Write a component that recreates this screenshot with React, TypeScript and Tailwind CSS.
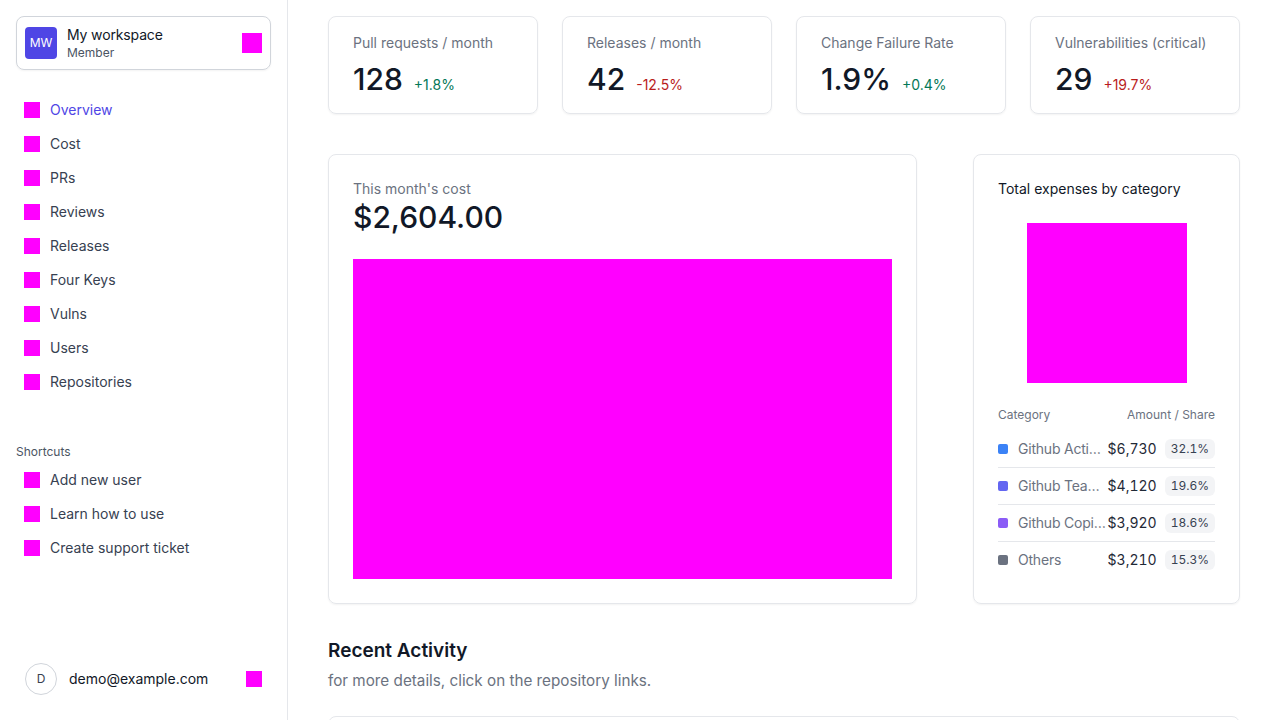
const navItems = ["Overview", "Cost", "PRs", "Reviews", "Releases", "Four Keys", "Vulns", "Users", "Repositories"];
const shortcuts = ["Add new user", "Learn how to use", "Create support ticket"];

const stats = [
  { label: "Pull requests / month", value: "128", delta: "+1.8%", up: true },
  { label: "Releases / month", value: "42", delta: "-12.5%", up: false },
  { label: "Change Failure Rate", value: "1.9%", delta: "+0.4%", up: true },
  { label: "Vulnerabilities (critical)", value: "29", delta: "+19.7%", up: false },
];

const categories = [
  { name: "Github Actions", amount: "$6,730", share: "32.1%", dot: "bg-[#3b82f6]" },
  { name: "Github Team Plan", amount: "$4,120", share: "19.6%", dot: "bg-[#6366f1]" },
  { name: "Github Copilot", amount: "$3,920", share: "18.6%", dot: "bg-[#8b5cf6]" },
  { name: "Others", amount: "$3,210", share: "15.3%", dot: "bg-[#6b7280]" },
];

const NavRow = ({ label, active }: { label: string; active?: boolean }) => (
  <a className={`flex items-center gap-2.5 px-2 py-[7px] text-sm ${active ? "text-[#4f46e5]" : "text-[#374151]"}`}>
    <span className="size-4 shrink-0 bg-[#ff00ff]" />
    {label}
  </a>
);

export default function App() {
  return (
    <div className="flex h-screen overflow-hidden bg-white font-['Inter',sans-serif] text-[#111827]">
      <aside className="flex w-[288px] shrink-0 flex-col border-r border-[#e5e7eb] p-4">
        <div className="flex h-[54px] items-center gap-2.5 rounded-lg border border-[#d1d5db] px-2 shadow-xs">
          <div className="flex size-8 items-center justify-center rounded-sm bg-[#4f46e5] text-xs text-white">MW</div>
          <div className="flex-1">
            <div className="text-sm leading-5 tracking-[-0.01em]">My workspace</div>
            <div className="text-xs leading-4 text-[#4b5563]">Member</div>
          </div>
          <span className="size-5 bg-[#ff00ff]" />
        </div>

        <nav className="mt-[23px] flex flex-col">
          {navItems.map((item, i) => (
            <NavRow key={item} label={item} active={i === 0} />
          ))}
        </nav>

        <div className="mt-[45px] text-xs leading-4 text-[#4b5563]">Shortcuts</div>
        <div className="mt-[3px] flex flex-col">
          {shortcuts.map((item) => (
            <NavRow key={item} label={item} />
          ))}
        </div>

        <div className="mt-auto mb-[9px] flex items-center gap-3 px-[9px]">
          <div className="flex size-8 items-center justify-center rounded-full border border-[#d1d5db] text-xs text-[#374151]">D</div>
          <span className="flex-1 text-sm">demo@example.com</span>
          <span className="size-4 bg-[#ff00ff]" />
        </div>
      </aside>

      <main className="flex-1 overflow-hidden px-10 pt-4">
        <div className="grid grid-cols-4 gap-6">
          {stats.map((s) => (
            <div key={s.label} className="h-[98px] rounded-lg border border-[#e5e7eb] px-6 py-4 shadow-xs">
              <div className="text-sm leading-5 text-[#6b7280]">{s.label}</div>
              <div className="mt-2 flex items-baseline gap-[11px]">
                <span className="text-3xl leading-9 font-[550]">{s.value}</span>
                <span className={`text-sm ${s.up ? "text-[#047857]" : "text-[#b91c1c]"}`}>{s.delta}</span>
              </div>
            </div>
          ))}
        </div>

        <div className="mt-10 flex gap-14">
          <section className="h-[450px] flex-1 rounded-lg border border-[#e5e7eb] p-6 shadow-xs">
            <div className="text-sm leading-5 text-[#6b7280]">This month's cost</div>
            <div className="text-3xl leading-9 font-[550]">$2,604.00</div>
            <div className="mt-6 h-[320px] bg-[#ff00ff]" />
          </section>

          <section className="h-[450px] w-[267px] shrink-0 rounded-lg border border-[#e5e7eb] p-6 shadow-xs">
            <h3 className="text-sm leading-5">Total expenses by category</h3>
            <div className="mx-auto mt-6 size-40 bg-[#ff00ff]" />
            <div className="mt-6 flex justify-between text-xs leading-4 text-[#6b7280]">
              <span>Category</span>
              <span>Amount / Share</span>
            </div>
            <ul className="mt-2">
              {categories.map((c, i) => (
                <li key={c.name} className={`flex h-[37px] items-center border-b ${i < 3 ? "border-[#e5e7eb]" : "border-transparent"}`}>
                  <span className={`size-2.5 shrink-0 rounded-[2px] ${c.dot}`} />
                  <span className="ml-2.5 min-w-0 flex-1 truncate text-sm tracking-[-0.015em] text-[#6b7280]">{c.name}</span>
                  <span className="text-sm text-[#1f2937] tabular-nums">{c.amount}</span>
                  <span className="ml-2 rounded-md bg-[#f3f4f6] px-1.5 py-0.5 text-xs leading-4 text-[#374151] tabular-nums">{c.share}</span>
                </li>
              ))}
            </ul>
          </section>
        </div>

        <h2 className="mt-[33px] text-[19px] leading-7 font-semibold">Recent Activity</h2>
        <p className="mt-1 text-[15.25px] leading-6 text-[#6b7280]">for more details, click on the repository links.</p>
        <div className="mt-[23px] h-[200px] rounded-lg border border-[#e5e7eb]" />
      </main>
    </div>
  );
}
